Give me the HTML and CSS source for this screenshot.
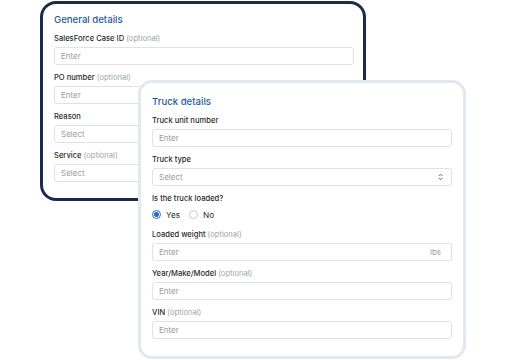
FILE: index.html
```html
<!DOCTYPE html>
<html lang="en">
<head>
<meta charset="utf-8">
<title>Forms</title>
<link rel="stylesheet" href="styles.css">
</head>
<body>
<div class="stage">
  <section class="card card-general">
    <h2 class="card-title">General details</h2>
    <div class="field">
      <div class="label">SalesForce Case ID <span class="opt">(optional)</span></div>
      <div class="input"><span class="ph">Enter</span></div>
    </div>
    <div class="field">
      <div class="label">PO number <span class="opt">(optional)</span></div>
      <div class="input"><span class="ph">Enter</span></div>
    </div>
    <div class="field">
      <div class="label">Reason</div>
      <div class="input"><span class="ph">Select</span></div>
    </div>
    <div class="field">
      <div class="label">Service <span class="opt">(optional)</span></div>
      <div class="input"><span class="ph">Select</span></div>
    </div>
  </section>

  <section class="card card-truck">
    <h2 class="card-title">Truck details</h2>
    <div class="field">
      <div class="label">Truck unit number</div>
      <div class="input"><span class="ph">Enter</span></div>
    </div>
    <div class="field">
      <div class="label">Truck type</div>
      <div class="input"><span class="ph">Select</span>
        <svg class="chev" width="5" height="8" viewBox="0 0 5 8"><path d="M0.8 3 L2.5 1.2 L4.2 3 M0.8 5 L2.5 6.8 L4.2 5" fill="none" stroke="#6b6b6b" stroke-width="1"/></svg>
      </div>
    </div>
    <div class="field">
      <div class="label">Is the truck loaded?</div>
      <div class="radios">
        <span class="radio"><span class="dot on"></span>Yes</span>
        <span class="radio"><span class="dot"></span>No</span>
      </div>
    </div>
    <div class="field">
      <div class="label">Loaded weight <span class="opt">(optional)</span></div>
      <div class="input"><span class="ph">Enter</span><span class="ph">lbs</span></div>
    </div>
    <div class="field">
      <div class="label">Year/Make/Model <span class="opt">(optional)</span></div>
      <div class="input"><span class="ph">Enter</span></div>
    </div>
    <div class="field">
      <div class="label">VIN <span class="opt">(optional)</span></div>
      <div class="input"><span class="ph">Enter</span></div>
    </div>
  </section>
</div>
</body>
</html>
```

FILE: styles.css
```css
* { box-sizing: border-box; }
html, body { margin: 0; padding: 0; background: #ffffff; }
body {
  font-family: Inter, "Noto Sans", "Liberation Sans", sans-serif;
  width: 507px;
  height: 360px;
  overflow: hidden;
}
.stage {
  position: relative;
  width: 507px;
  height: 360px;
  padding: 1px 0 0 40px;
}
.card {
  background: #fff;
  display: flex;
  flex-direction: column;
  gap: 8px;
}
.card-general {
  width: 326px;
  border: 3px solid #1c2b4c;
  border-radius: 16px;
  padding: 9px 9px 16px 11px;
}
.card-truck {
  position: absolute;
  left: 138px;
  top: 80px;
  width: 328px;
  border: 3px solid #e2e8ef;
  border-radius: 14px;
  padding: 12px 11px 17px 11px;
}
.card-title {
  margin: 0;
  font-size: 9.6px;
  line-height: 13px;
  font-weight: 500;
  color: #1f5b9f;
}
.field {
  display: flex;
  flex-direction: column;
  gap: 3px;
}
.label {
  font-size: 7.6px;
  line-height: 10px;
  font-weight: 500;
  color: #2a2a2a;
  white-space: nowrap;
}
.opt { font-weight: 400; color: #a0a4a8; }
.input {
  height: 18px;
  width: 300px;
  border: 1px solid #dfe2e6;
  border-radius: 3px;
  background: #fff;
  display: flex;
  align-items: center;
  justify-content: space-between;
  padding: 0 10px 0 6px;
}
.ph {
  font-size: 8px;
  color: #9b9b9b;
}
.chev { display: block; margin-right: -2px; }
.radios {
  height: 15px;
  display: flex;
  align-items: center;
  gap: 9px;
}
.radio {
  display: flex;
  align-items: center;
  gap: 5px;
  font-size: 8.2px;
  color: #2a2a2a;
}
.dot {
  width: 9px;
  height: 9px;
  border-radius: 50%;
  border: 1px solid #c3c6ca;
  background: #fff;
}
.dot.on {
  border: 1.5px solid #2b6fd6;
  background: radial-gradient(circle, #2b6fd6 0 2.2px, #fff 2.6px);
}
```
